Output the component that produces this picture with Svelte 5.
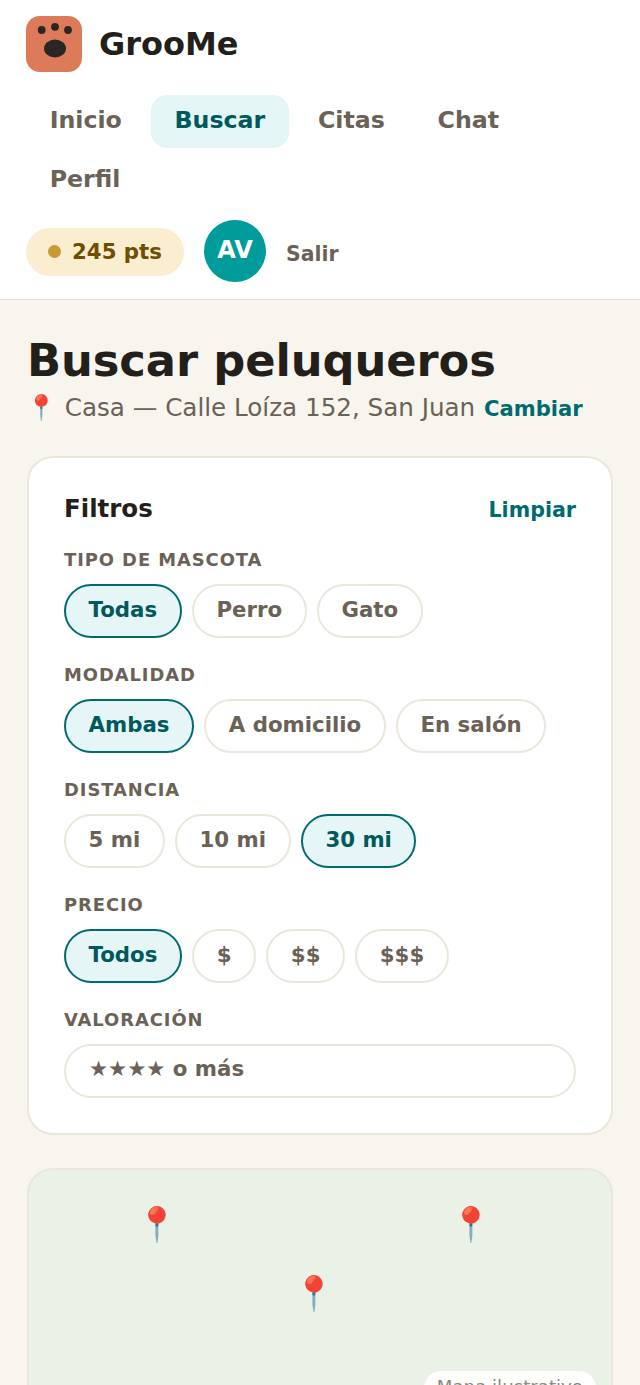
<script>
  const filters = [
    { label: 'TIPO DE MASCOTA', items: [['Todas', true], ['Perro'], ['Gato']] },
    { label: 'MODALIDAD', items: [['Ambas', true], ['A domicilio'], ['En salón']] },
    { label: 'DISTANCIA', items: [['5 mi'], ['10 mi'], ['30 mi', true]] },
    { label: 'PRECIO', items: [['Todos', true], ['$'], ['$$'], ['$$$']] }
  ];
</script>

<div class="page">
  <header>
    <div class="brand">
      <svg class="logo" viewBox="0 0 56 56" aria-hidden="true">
        <rect width="56" height="56" rx="14" fill="#dc7a5a" />
        <ellipse cx="29" cy="32.5" rx="11" ry="9" fill="#2b2623" />
        <circle cx="15.7" cy="14" r="3.9" fill="#2b2623" />
        <circle cx="29" cy="10.8" r="3.9" fill="#2b2623" />
        <circle cx="42" cy="14" r="3.9" fill="#2b2623" />
      </svg>
      <span class="name">GrooMe</span>
    </div>
    <nav>
      <a href="#inicio">Inicio</a>
      <a href="#buscar" class="active">Buscar</a>
      <a href="#citas">Citas</a>
      <a href="#chat">Chat</a>
      <a href="#perfil">Perfil</a>
    </nav>
    <div class="user">
      <div class="points"><i></i>245 pts</div>
      <div class="avatar">AV</div>
      <button class="logout">Salir</button>
    </div>
  </header>

  <main>
    <h1>Buscar peluqueros</h1>
    <p class="loc">📍 Casa — Calle Loíza 152, San Juan <b>Cambiar</b></p>

    <section class="card">
      <div class="head">
        <h2>Filtros</h2>
        <button class="clear">Limpiar</button>
      </div>
      {#each filters as f}
        <div class="label">{f.label}</div>
        <div class="chips">
          {#each f.items as it}
            <button class="chip" class:on={it[1]}>{it[0]}</button>
          {/each}
        </div>
      {/each}
      <div class="label">VALORACIÓN</div>
      <div class="select">★★★★ o más</div>
    </section>

    <section class="map">
      <span class="pin" style="left:22%;top:36px">📍</span>
      <span class="pin" style="left:76%;top:36px">📍</span>
      <span class="pin" style="left:49%;top:105px">📍</span>
      <span class="tag">Mapa ilustrativo</span>
    </section>
  </main>
</div>

<style>
  :global(body) {
    margin: 0;
    background: #f8f5ef;
    font-family: "DejaVu Sans", sans-serif;
    color: #231f1a;
  }
  .page { height: 1385px; overflow: hidden; }
  header {
    background: #fff;
    border-bottom: 1px solid #e8e2d8;
    padding: 16px 26px 0;
    height: 300px;
    box-sizing: border-box;
  }
  .brand { display: flex; align-items: center; gap: 17px; height: 56px; }
  .logo { width: 56px; height: 56px; display: block; }
  .name { font-size: 32px; font-weight: 700; }
  nav { display: flex; flex-wrap: wrap; gap: 6px 5.4px; margin-top: 23px; }
  nav a {
    display: block;
    padding: 0 23.65px;
    height: 53px;
    line-height: 50px;
    border-radius: 16px;
    font-size: 23.7px;
    font-weight: 700;
    color: #6b6257;
    text-decoration: none;
  }
  nav a.active { background: #e4f5f6; color: #00595c; }
  .user { display: flex; align-items: flex-start; margin-top: 13px; height: 62px; }
  .points {
    display: flex;
    align-items: center;
    gap: 11px;
    width: 158px;
    box-sizing: border-box;
    height: 48px;
    margin-top: 8px;
    padding: 0 22px 2px;
    border-radius: 24px;
    background: #fbedcf;
    color: #6e4e00;
    font-size: 21.3px;
    font-weight: 700;
    white-space: nowrap;
  }
  .points i { width: 13px; height: 13px; border-radius: 50%; background: #c99a33; flex: none; }
  .avatar {
    width: 62px;
    height: 62px;
    box-sizing: border-box;
    padding-bottom: 2px;
    border-radius: 50%;
    background: #009c9c;
    color: #fff;
    margin-left: 20px;
    display: flex;
    align-items: center;
    justify-content: center;
    font-size: 24px;
    font-weight: 700;
  }
  button { font-family: inherit; cursor: pointer; background: none; border: 0; padding: 0; }
  .logout { margin-left: 20px; height: 62px; font-size: 20.4px; font-weight: 700; color: #6b6257; padding-top: 5px; }
  main { padding: 33px 27px 0; }
  h1 { margin: 0; font-size: 44.8px; line-height: 56px; font-weight: 700; color: #231f1a; letter-spacing: -0.12px; }
  .loc { margin: 1px 0 0 -1px; font-size: 24.6px; line-height: 36px; color: #6b6257; white-space: nowrap; }
  .loc b { font-size: 21.1px; color: #006b6e; margin-left: 1px; }
  .card {
    margin-top: 29px;
    background: #fff;
    border: 2px solid #ebe6db;
    border-radius: 26px;
    padding: 35px 35px 36px;
    box-sizing: border-box;
    height: 679px;
  }
  .head { display: flex; justify-content: space-between; align-items: center; height: 30px; }
  h2 { margin: 0; font-size: 24.5px; font-weight: 700; }
  .clear { font-size: 20.6px; font-weight: 700; color: #006b6e; padding-top: 3px; }
  .label {
    margin-top: 26px;
    font-size: 17.9px;
    line-height: 22px;
    font-weight: 700;
    letter-spacing: 0.94px;
    color: #6b6257;
  }
  .chips { display: flex; gap: 10.3px; margin-top: 13px; height: 54px; }
  .chip {
    height: 54px;
    box-sizing: border-box;
    padding: 0 22.5px 4px;
    border: 2px solid #ebe6db;
    border-radius: 27px;
    background: #fff;
    font-size: 21.3px;
    font-weight: 700;
    color: #6b6257;
  }
  .chip.on { background: #e6f6f7; border-color: #006b6e; color: #00595c; }
  .select {
    margin-top: 13px;
    height: 54px;
    box-sizing: border-box;
    border: 2px solid #ebe6db;
    border-radius: 27px;
    padding: 0 23px;
    line-height: 46px;
    font-size: 21.3px;
    font-weight: 700;
    color: #6b6257;
  }
  .map {
    position: relative;
    margin-top: 33px;
    height: 300px;
    background: #eaf1e6;
    border: 2px solid #ebe6db;
    border-radius: 26px;
  }
  .pin { position: absolute; font-size: 33.6px; line-height: 38px; transform: translateX(-50%); }
  .tag {
    position: absolute;
    right: 15px;
    top: 201px;
    padding: 0 13px;
    height: 34px;
    line-height: 32px;
    background: #fff;
    border-radius: 17px;
    font-size: 18.2px;
    color: #8f877b;
  }
</style>
